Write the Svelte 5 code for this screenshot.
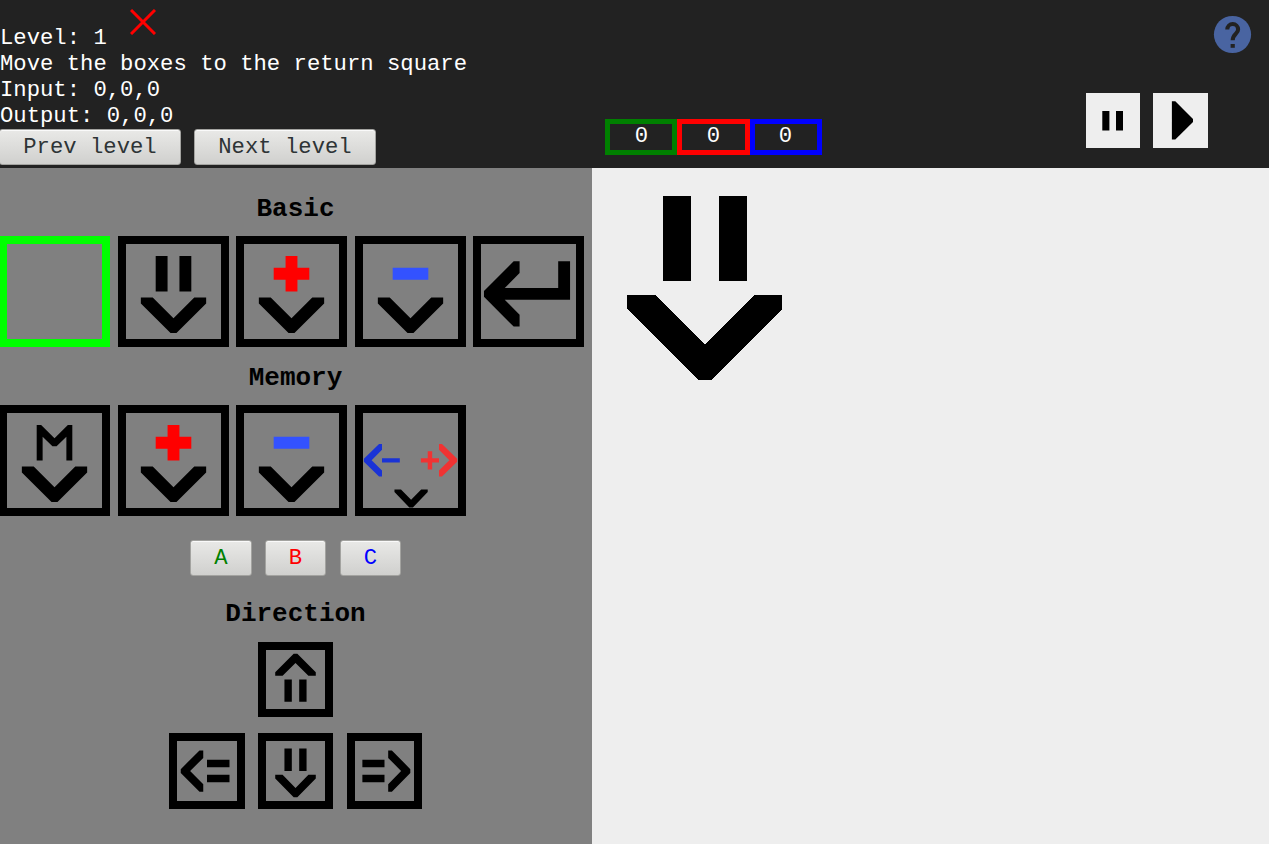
<script>
  const down = [
    ['#000', 'M2.5 9H4.5L8 12.5L11.5 9H13.5V10L8.5 15H7.5L2.5 10Z']
  ];
  const bars = ['#000', 'M5 2H7V8H5ZM9 2H11V8H9Z'];
  const plus = ['#f00', 'M7 2H9V4H11V6H9V8H7V6H5V4H7Z'];
  const minus = ['#3352ff', 'M5 4H11V6H5Z'];
  const letter = ['#000', 'M5 2H5.75L8 4.25L10.25 2H11V8H10V4L8.35 5.6H7.65L6 4V8H5Z'];
  const enter = [
    ['#000', 'M5.5 2.9H6.5V4.9L4 7.4H13V2.9H15V9.4H4L6.5 11.9V13.9H5.5L.5 8.9V7.9Z']
  ];
  const branch = [
    ['#1a33d6', 'M2.7 5.2H3.2V6.2L1.45 7.95L3.2 9.7V10.7H2.7L.15 8.2V7.7ZM3.2 7.6H6.2V8.35H3.2Z'],
    ['#f03333', 'M13.3 5.2H12.8V6.2L14.55 7.95L12.8 9.7V10.7H13.3L15.85 8.2V7.7ZM10.9 6.45H11.65V7.6H12.8V8.35H11.65V9.5H10.9V8.35H9.75V7.6H10.9Z'],
    ['#000', 'M5.3 12.87H6.4L8.1 14.6L9.8 12.87H10.9V13.3L8.4 15.9H7.8L5.3 13.3Z']
  ];

  const basic = [[], [bars, ...down], [plus, ...down], [minus, ...down], enter];
  const memory = [[letter, ...down], [plus, ...down], [minus, ...down], branch];
  const arrow = [bars, ...down];
  const directions = [
    ['left', 90],
    ['down', 0],
    ['right', -90]
  ];
  const registers = ['green', 'red', 'blue'];

  let selected = $state(0);
</script>

{#snippet icon(shapes, angle)}
  <svg viewBox="0 0 16 16" preserveAspectRatio="none">
    <g transform="rotate({angle} 8 8)">
      {#each shapes as [fill, d]}<path {fill} {d} />{/each}
    </g>
  </svg>
{/snippet}

<div class="page">
  <header>
    <div class="info">
      <div class="line">Level: 1<svg class="cross" width="26" height="26" viewBox="0 0 26 26"><path d="M1 1L25 25M25 1L1 25" stroke="#f00" stroke-width="3" /></svg></div>
      <div class="line">Move the boxes to the return square</div>
      <div class="line">Input: 0,0,0</div>
      <div class="line">Output: 0,0,0</div>
      <div class="levels">
        <button>Prev level</button>
        <button>Next level</button>
      </div>
    </div>
    <div class="registers">
      {#each registers as name}<div class="register {name}">0</div>{/each}
    </div>
    <div class="controls">
      <svg class="help" width="45" height="45" viewBox="0 0 45 45">
        <circle cx="22.5" cy="22.5" r="18.6" fill="#4964a1" />
        <path d="M17.3 17.4a5.4 5.4 0 0 1 10.8 0c0 4.4-5.4 4.8-5.4 10.8" fill="none" stroke="#222" stroke-width="4.1" />
        <path d="M20.6 32H24.8V35.8H20.6Z" fill="#222" />
      </svg>
      <div class="playback">
        <svg width="54" height="55" viewBox="0 0 54 55"><path d="M16.3 18H23.4V37.6H16.3ZM30 18H37V37.6H30Z" /></svg>
        <svg width="55" height="55" viewBox="0 0 55 55"><path d="M18.9 8.3H22.3L40 26V28.9L22.3 46.5H18.9Z" /></svg>
      </div>
    </div>
  </header>

  <main>
    <section class="palette">
      <h2>Basic</h2>
      <div class="tiles">
        {#each basic as shapes, i}
          <div class="tile" class:selected={selected === i}>{@render icon(shapes, 0)}</div>
        {/each}
      </div>
      <h2 class="second">Memory</h2>
      <div class="tiles">
        {#each memory as shapes}
          <div class="tile">{@render icon(shapes, 0)}</div>
        {/each}
      </div>
      <div class="letters">
        <button class="a">A</button>
        <button class="b">B</button>
        <button class="c">C</button>
      </div>
      <h2 class="third">Direction</h2>
      <div class="up tile small">{@render icon(arrow, 180)}</div>
      <div class="directions">
        {#each directions as [name, angle]}
          <div class="tile small {name}">{@render icon(arrow, angle)}</div>
        {/each}
      </div>
    </section>
    <section class="board">
      <svg class="cell" viewBox="0 0 16 16" shape-rendering="crispEdges">
        {#each arrow as [fill, d]}<path {fill} {d} />{/each}
      </svg>
    </section>
  </main>
</div>

<style>
  :global(body) { margin: 0; overflow: hidden; }
  * { box-sizing: border-box; }
  .page {
    width: 1269px;
    height: 844px;
    display: flex;
    flex-direction: column;
    overflow: hidden;
    font: 22.24px/26px 'Liberation Mono', monospace;
  }
  svg { display: block; }
  header {
    height: 168px;
    flex: none;
    display: flex;
    background: #222;
    color: #fff;
  }
  .info { width: 605px; padding-top: 25px; }
  .line { height: 26px; display: flex; white-space: pre; }
  .cross { margin: -16px 0 0 22.9px; }
  .levels { display: flex; gap: 13px; margin-left: -1px; }
  button {
    height: 36px;
    padding: 0 0 1px;
    border: 1px solid #a3a3a0;
    border-radius: 3px;
    background: linear-gradient(#e9e9e7, #d0d0ce);
    box-shadow: inset 0 1px #fafafa;
    color: #2e3436;
    font: inherit;
  }
  .levels button { width: 182px; }
  .registers { display: flex; padding-top: 119px; width: 481px; }
  .register {
    width: 72px;
    height: 36px;
    border: 5px solid;
    padding-left: 1px;
    line-height: 25px;
    text-align: center;
  }
  .register.green { border-color: green; }
  .register.red { border-color: red; width: 73px; padding-left: 0; }
  .register.blue { border-color: blue; padding: 0 1px 0 0; }
  .controls { width: 183px; padding-top: 12px; }
  .help { margin-left: 124px; }
  .playback { display: flex; gap: 13px; margin-top: 36px; }
  .playback svg { background: #eee; }
  main { flex: 1; display: flex; }
  .palette { width: 592px; background: #808080; }
  .board { flex: 1; background: #eee; }
  .cell { width: 225.69px; height: 225.69px; }
  h2 {
    margin: 26px 1px 0 0;
    height: 42px;
    font-size: 26px;
    line-height: 30px;
    text-align: center;
  }
  h2.second { margin-top: 16px; }
  h2.third { margin-top: 23px; height: 43px; }
  .tiles {
    display: grid;
    grid-template-columns: 119px 118px 119px 118px 111px;
    margin-left: -1px;
  }
  .tile { width: 111px; height: 111px; border: 8px solid #000; }
  .tile.selected { border-color: #0f0; }
  .tile svg { width: 100%; height: 100%; }
  .letters { display: flex; gap: 13px; margin: 24px 0 0 190px; }
  .letters button { width: 62px; }
  .letters .b, .letters .c { width: 61px; }
  .letters .c { margin-left: 1px; }
  .letters .a { color: green; }
  .letters .b { color: red; }
  .letters .c { color: blue; }
  .small { width: 75px; height: 76px; }
  .up { height: 75px; margin-left: 258px; }
  .directions { display: flex; margin: 16px 0 0 169px; }
  .left { width: 76px; margin-right: 13px; }
  .down { margin-right: 14px; }
</style>
